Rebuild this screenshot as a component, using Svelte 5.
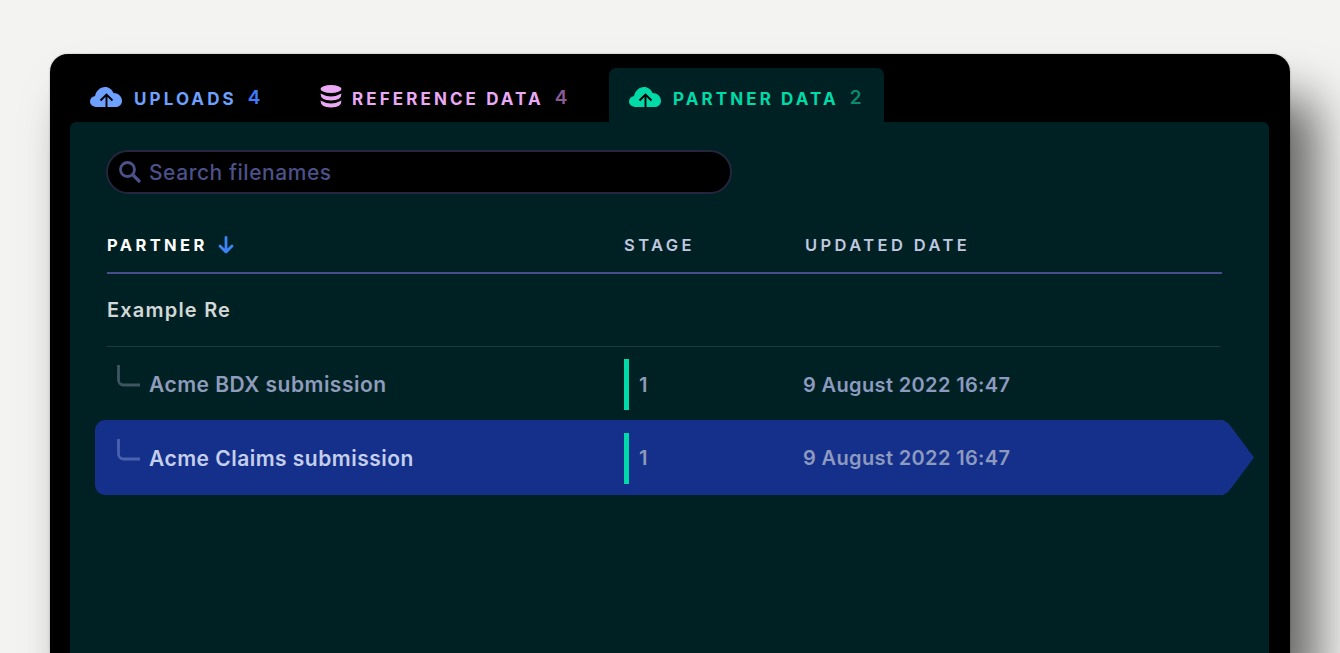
<script>
  const tabs = [
    { id: 'uploads', label: 'UPLOADS', count: 4, icon: 'cloud' },
    { id: 'reference', label: 'REFERENCE DATA', count: 4, icon: 'db' },
    { id: 'partner', label: 'PARTNER DATA', count: 2, icon: 'cloud' }
  ];
  const rows = [
    { name: 'Acme BDX submission', stage: 1, date: '9 August 2022 16:47', selected: false },
    { name: 'Acme Claims submission', stage: 1, date: '9 August 2022 16:47', selected: true }
  ];
</script>

<div class="window">
  <nav class="tabs">
    {#each tabs as t}
      <div class="tab {t.id}">
        {#if t.icon === 'cloud'}
          <svg class="ico cloud" viewBox="0 0 32 20" aria-hidden="true">
            <path fill="currentColor" d="M7 20C3 20 0 17.500 0 14.500 0 11.500 2 9.500 5 9 6 4 10 0 15 0c4 0 7 2.500 8.500 6C28 6 32 9.500 32 14c0 3.500-3 6-6 6H7z"/>
            <path d="M10.500 13.500L16.500 7.500l6 6M16.500 8.500V20" fill="none" stroke="#000" stroke-width="1.900"/>
          </svg>
        {:else}
          <svg class="ico db" viewBox="0 0 22 23" aria-hidden="true">
            <ellipse cx="11" cy="4" rx="10.500" ry="4" fill="currentColor"/>
            <path fill="currentColor" d="M.5 8.500Q11 14.500 21.500 8.500 21.500 15.500 11 15.500 .5 15.500 .5 8.500zM.5 15.500Q11 21.500 21.500 15.500 21.500 22.500 11 22.500 .5 22.500 .5 15.500z"/>
          </svg>
        {/if}
        <span class="label">{t.label}</span>
        <span class="count">{t.count}</span>
      </div>
    {/each}
  </nav>

  <main class="panel">
    <div class="search">
      <svg viewBox="0 0 22 22" class="mag" aria-hidden="true">
        <circle cx="8.500" cy="8.500" r="7" fill="none" stroke="currentColor" stroke-width="2.800"/>
        <path d="M14.500 14.500L20 20" stroke="currentColor" stroke-width="3.200" stroke-linecap="round"/>
      </svg>
      <span>Search filenames</span>
    </div>

    <div class="table">
      <div class="head grid">
        <div class="sortcol">PARTNER
          <svg viewBox="0 0 16 18" class="arrow" aria-hidden="true">
            <path d="M8 1.500V15.500M2 10l6 6 6-6" fill="none" stroke="currentColor" stroke-width="2.800" stroke-linecap="round" stroke-linejoin="round"/>
          </svg>
        </div>
        <div>STAGE</div>
        <div class="dh">UPDATED DATE</div>
      </div>

      <div class="group">Example Re</div>

      {#each rows as r}
        <div class="row grid" class:selected={r.selected}>
          <div class="name">
            <svg viewBox="0 0 23 22" class="elbow" aria-hidden="true">
              <path d="M1.500 0V15a5 5 0 0 0 5 5H23" fill="none" stroke="currentColor" stroke-width="2.800"/>
            </svg>
            <span>{r.name}</span>
          </div>
          <div class="stage"><span class="bar"></span><span>{r.stage}</span></div>
          <div class="date">{r.date}</div>
        </div>
      {/each}
    </div>
  </main>
</div>

<style>
  :global(body) {
    margin: 0;
    background: #f3f3f1;
    height: 653px;
    overflow: hidden;
    font-family: Inter, "Liberation Sans", sans-serif;
  }
  .window {
    margin: 54px 50px 0;
    height: 599px;
    box-sizing: border-box;
    background: #000;
    border-radius: 18px 18px 0 0;
    padding: 14px 21px 0 20px;
    box-shadow: 26px 44px 50px rgba(0, 0, 0, 0.6), 0 0 2px rgba(0, 0, 0, 0.3);
  }
  .tabs {
    display: flex;
    height: 54px;
  }
  .tab {
    display: flex;
    align-items: center;
    height: 54px;
    padding-top: 7px;
    padding-left: 20px;
    box-sizing: border-box;
    font-weight: 600;
  }
  .tab.uploads { width: 230px; color: #6ea0ff; }
  .tab.reference { width: 309px; color: #e9a9f5; }
  .tab.partner {
    width: 275px;
    color: #00d9a8;
    background: #002123;
    border-radius: 7px 7px 0 0;
  }
  .ico { display: block; flex: none; }
  .cloud { width: 32px; height: 20px; margin-top: -4px; }
  .db { width: 22px; height: 23px; margin-top: -5px; }
  .label {
    font-size: 17px;
    font-weight: 700;
    letter-spacing: 3.100px;
    margin-left: 12px;
  }
  .reference .label { margin-left: 10px; }
  .count {
    font-size: 19px;
    margin-left: 11px;
    margin-top: -3px;
    letter-spacing: 1px;
  }
  .uploads .count { color: #3d7bff; }
  .reference .count { color: #8a5a94; }
  .partner .count { color: #0a8b6e; }
  .panel {
    background: #002123;
    border-radius: 6px 6px 0 0;
    height: 545px;
    padding: 28px 47px 0 36px;
    box-sizing: border-box;
  }
  .search {
    width: 626px;
    height: 44px;
    box-sizing: border-box;
    background: #000;
    border: 2px solid #252540;
    border-radius: 22px;
    display: flex;
    align-items: center;
    padding-left: 11px;
    color: #4b5189;
    font-size: 21px;
    font-weight: 500;
    letter-spacing: 0.550px;
    gap: 8px;
  }
  .mag { width: 22px; height: 22px; flex: none; }
  .table { margin-left: 1px; }
  .grid {
    display: grid;
    grid-template-columns: 517px 179px 1fr;
  }
  .head {
    margin-top: 28px;
    height: 52px;
    box-sizing: border-box;
    border-bottom: 2px solid #484d8a;
    font-size: 16.500px;
    font-weight: 600;
    letter-spacing: 3.400px;
    color: #c0c8e0;
    align-items: center;
    padding-bottom: 5px;
  }
  .sortcol {
    color: #fff;
    font-weight: 700;
    display: flex;
    align-items: center;
    gap: 10px;
  }
  .arrow { width: 16px; height: 18px; color: #3d84f5; }
  .dh { margin-left: 2px; }
  .group {
    height: 73px;
    box-sizing: border-box;
    border-bottom: 1px solid #1d3a3e;
    width: 1113px;
    display: flex;
    align-items: center;
    font-size: 20px;
    font-weight: 600;
    letter-spacing: 1.200px;
    color: #d2d8d8;
  }
  .row {
    height: 73px;
    box-sizing: border-box;
    padding-top: 2px;
    align-items: center;
    color: #8f9cbc;
    font-size: 21px;
    font-weight: 600;
    margin-left: -12px;
    padding-left: 12px;
  }
  .row.selected {
    height: 75px;
    padding-top: 1px;
    background: #15308a;
    width: 1159px;
    border-radius: 10px 0 0 10px;
    color: #c4cfec;
    clip-path: polygon(0 0, 1128px 0, 1133px 3px, 1137px 8px, 100% 50%, 1137px 67px, 1133px 72px, 1128px 100%, 0 100%);
  }
  .name {
    display: flex;
    align-items: center;
    position: relative;
    padding-left: 42px;
    letter-spacing: 0.480px;
  }
  .elbow {
    position: absolute;
    left: 10px;
    top: -7px;
    width: 23px;
    height: 22px;
    color: #3f5660;
  }
  .selected .elbow { color: #4a62ae; }
  .stage {
    display: flex;
    align-items: center;
    gap: 10px;
    height: 51px;
    font-size: 20px;
    color: #8d9ab8;
  }
  .bar {
    width: 5px;
    height: 51px;
    background: #00d9a8;
  }
  .date { color: #8d9ac0; font-size: 20px; letter-spacing: 0.360px; }
</style>
